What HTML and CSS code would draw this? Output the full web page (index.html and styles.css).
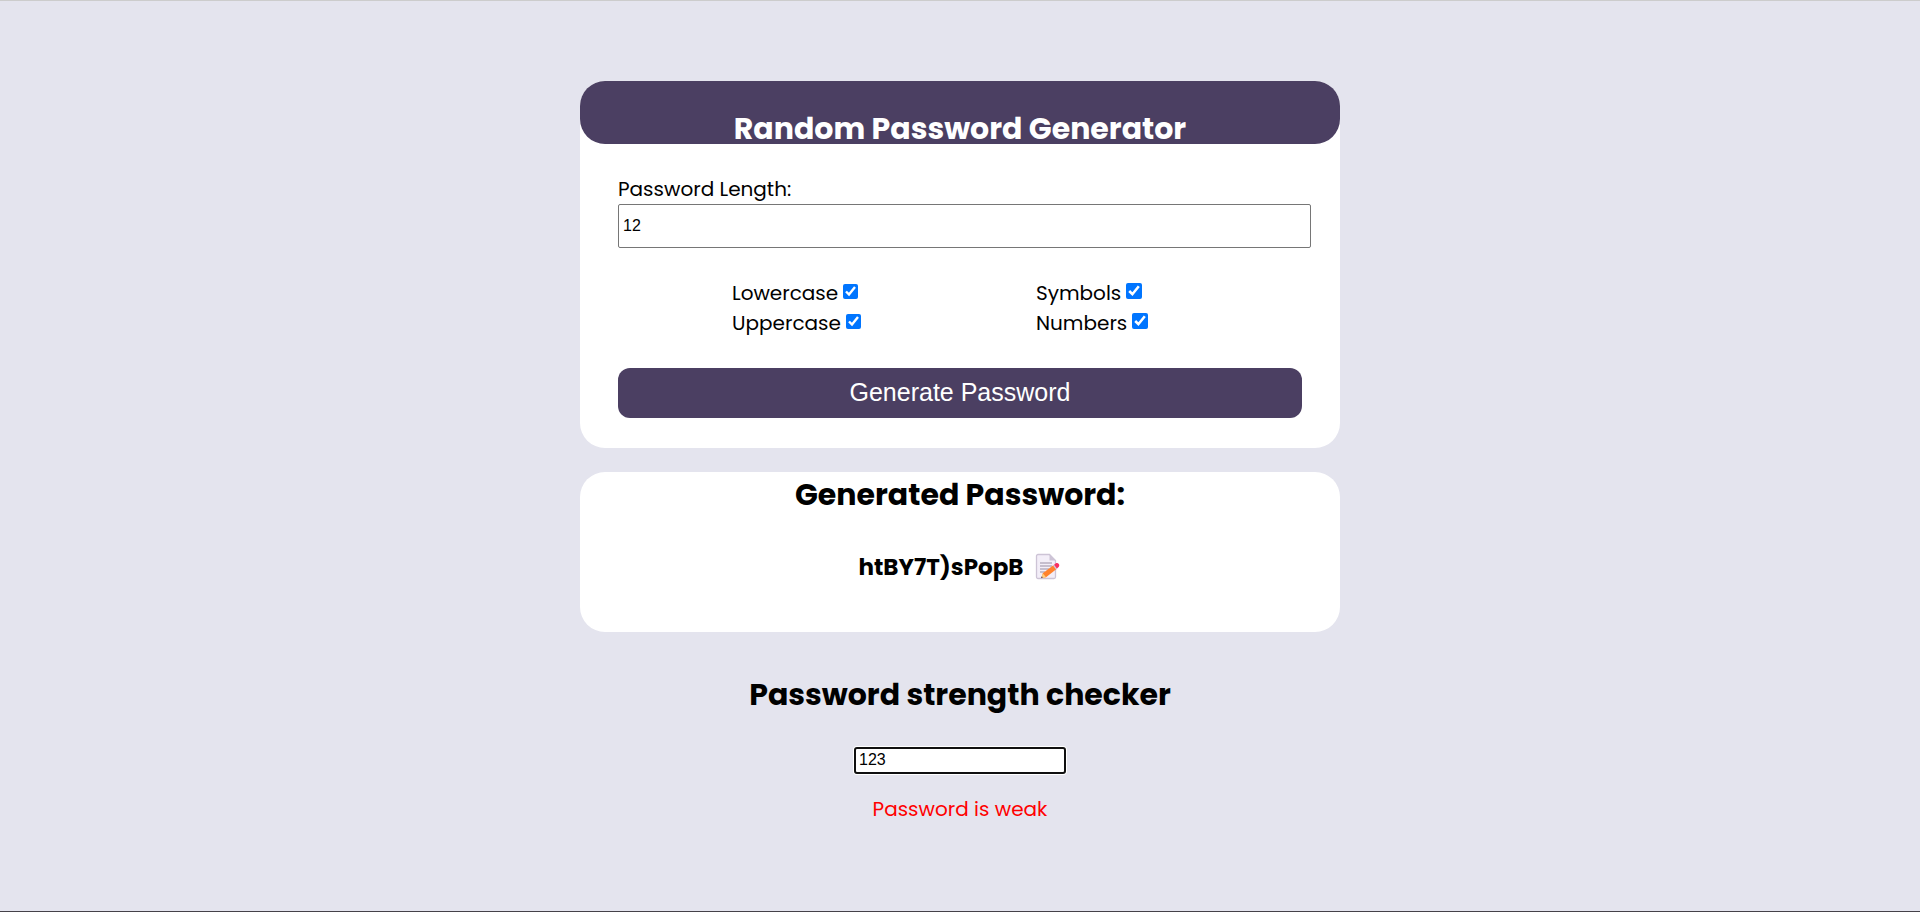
FILE: index.html
```html
<!DOCTYPE html>
<html lang="en">
<head>
<meta charset="utf-8">
<meta name="viewport" content="width=device-width, initial-scale=1">
<title>Random Password Generator</title>
<link rel="stylesheet" href="styles.css">
</head>
<body>
<main class="page">
  <section class="card">
    <header class="card-header">
      <h1 class="title">Random Password Generator</h1>
    </header>
    <form class="form">
      <label class="length-label" for="length">Password Length:</label>
      <input class="length-input" id="length" type="text" inputmode="numeric" value="12">
      <div class="options">
        <label class="option">Lowercase <input class="check" type="checkbox" checked></label>
        <label class="option">Symbols <input class="check check-large" type="checkbox" checked></label>
        <label class="option">Uppercase <input class="check" type="checkbox" checked></label>
        <label class="option">Numbers <input class="check check-large" type="checkbox" checked></label>
      </div>
      <button class="generate" type="button">Generate Password</button>
    </form>
  </section>

  <section class="card result">
    <h2 class="heading">Generated Password:</h2>
    <div class="password-row">
      <span class="password">htBY7T)sPopB</span>
      <button class="copy" type="button" aria-label="Copy password">
        <svg class="memo" viewBox="0 0 26 28" aria-hidden="true">
          <path d="M3 1.5h11.5l6 6V24a1.5 1.5 0 0 1-1.500 1.500H3A1.500 1.500 0 0 1 1.500 24V3A1.500 1.500 0 0 1 3 1.500z" fill="#f3eef8" stroke="#cdc4d6" stroke-width="1.300"/>
          <path d="M14.500 1.500l6 6h-6z" fill="#cdc4d6"/>
          <path d="M5 10h12M5 13h12M5 16h9M5 19h5" stroke="#998ea4" stroke-width="1.200" fill="none"/>
          <path d="M7.800 20.300L18.600 12.100l3 3.900L11 24.200l-4.600.7z" fill="#ff822d"/>
          <path d="M7.800 20.300L11 24.200l-4.600.7z" fill="#ffce7c"/>
          <path d="M6.900 23.300l.9 1.300-1.900.7z" fill="#433b6b"/>
          <path d="M18 12.500l1.500-1.100 3 3.900-1.500 1.100z" fill="#d3c8dc"/>
          <path d="M19.100 11.700l1.500-1.100c1.100-.8 2.400-.6 3.200.4s.6 2.500-.4 3.300L21.900 15.500z" fill="#f92f60"/>
        </svg>
      </button>
    </div>
  </section>

  <section class="strength">
    <h2 class="heading">Password strength checker</h2>
    <input class="strength-input" type="text" value="123" aria-label="Password to check">
    <p class="verdict">Password is weak</p>
  </section>
</main>
</body>
</html>
```
FILE: styles.css
```css
* {
  box-sizing: border-box;
}

body {
  margin: 0;
  min-height: 100vh;
  background: #e4e4ee;
  border-top: 1px solid #cccccc;
  border-bottom: 1px solid #454149;
  color: #000;
  font-family: Poppins, Inter, "Open Sans", sans-serif;
  font-size: 20px;
  line-height: 30px;
}

.page {
  width: min(760px, 94%);
  margin: 0 auto;
  padding: 80px 0 40px;
}

.card {
  background: #fff;
  border-radius: 25px;
}

.card-header {
  padding-top: 33px;
  background: #4b3f62;
  border-radius: 25px;
  text-align: center;
}

.title {
  margin: 0;
  color: #fff;
  font-size: 30px;
  line-height: 30px;
}

.form {
  padding: 30px 5%;
}

.length-label {
  display: block;
}

.length-input {
  display: block;
  box-sizing: content-box;
  width: 100%;
  height: 42px;
  padding: 0 3px 0 4px;
  border: 1px solid #767676;
  border-radius: 2px;
  background: #fff;
  color: #000;
  font-family: "Liberation Sans", Arial, sans-serif;
  font-size: 16px;
  outline: none;
}

.options {
  display: grid;
  grid-template-columns: 304fr 266fr;
  margin: 30px 0;
  padding-left: 114px;
}

.option {
  display: flex;
  align-items: center;
  gap: 5px;
}

.check {
  width: 15px;
  height: 15px;
  margin: 0 0 4px;
  accent-color: #0075ff;
}

.check-large {
  width: 16px;
  height: 16px;
}

.generate {
  display: block;
  width: 100%;
  height: 50px;
  padding: 0 0 2px;
  border: 0;
  border-radius: 12px;
  background: #4b3f62;
  color: #fff;
  font-family: "Liberation Sans", Arial, sans-serif;
  font-size: 25px;
}

.result {
  margin-top: 24px;
  padding-bottom: 47px;
  text-align: center;
}

.heading {
  margin: 0;
  font-size: 30px;
  line-height: 46px;
}

.password-row {
  display: flex;
  justify-content: center;
  align-items: center;
  gap: 12px;
  margin-top: 31px;
  height: 36px;
}

.password {
  font-size: 23px;
  font-weight: 700;
}

.copy {
  display: flex;
  padding: 0;
  border: 0;
  background: none;
}

.memo {
  width: 26px;
  height: 28px;
}

.strength {
  display: flex;
  flex-direction: column;
  align-items: center;
  margin-top: 40px;
}

.strength-input {
  width: 212px;
  height: 27px;
  margin-top: 29px;
  padding: 0 3px 2px;
  border: 2px solid #101010;
  border-radius: 3px;
  box-shadow: 0 0 0 1px #fff;
  background: #fff;
  color: #000;
  font-family: "Liberation Sans", Arial, sans-serif;
  font-size: 16px;
  outline: none;
}

.verdict {
  margin: 20px 0 0;
  color: #ff0000;
}
```
